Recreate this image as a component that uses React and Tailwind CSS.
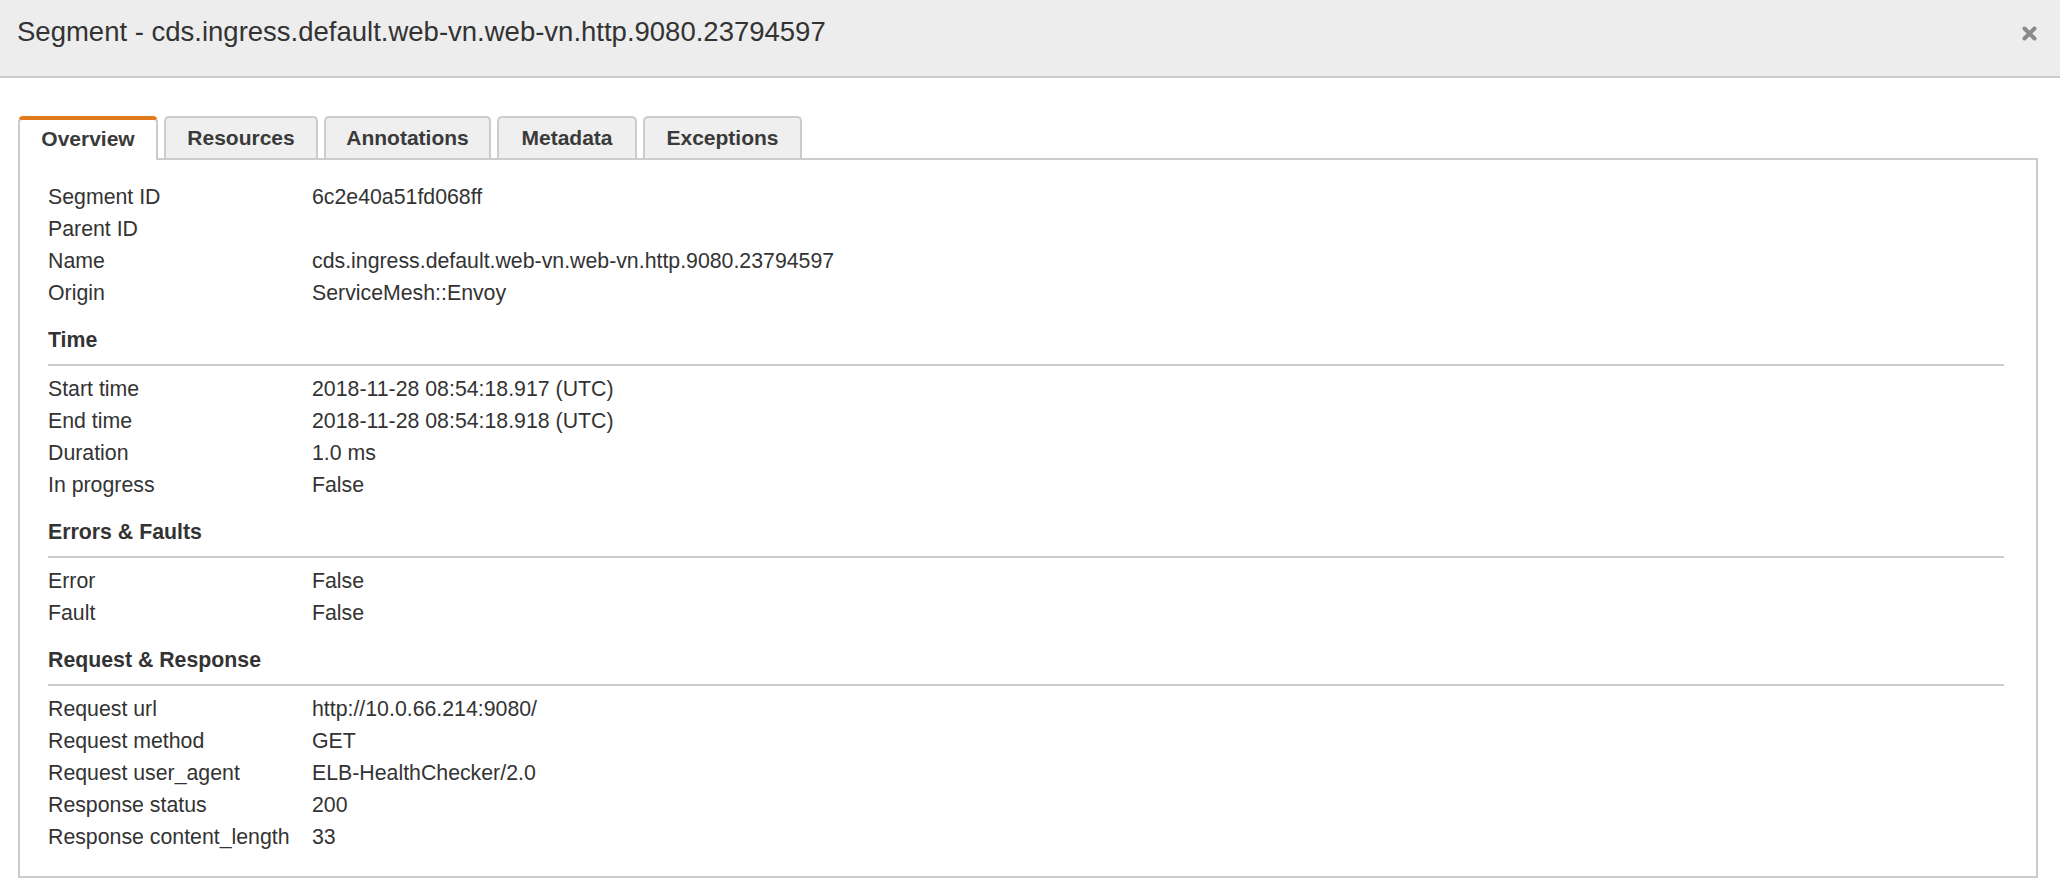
const overview = [
  ["Segment ID", "6c2e40a51fd068ff"],
  ["Parent ID", ""],
  ["Name", "cds.ingress.default.web-vn.web-vn.http.9080.23794597"],
  ["Origin", "ServiceMesh::Envoy"],
];

const sections = [
  {
    title: "Time",
    rows: [
      ["Start time", "2018-11-28 08:54:18.917 (UTC)"],
      ["End time", "2018-11-28 08:54:18.918 (UTC)"],
      ["Duration", "1.0 ms"],
      ["In progress", "False"],
    ],
  },
  {
    title: "Errors & Faults",
    rows: [
      ["Error", "False"],
      ["Fault", "False"],
    ],
  },
  {
    title: "Request & Response",
    rows: [
      ["Request url", "http://10.0.66.214:9080/"],
      ["Request method", "GET"],
      ["Request user_agent", "ELB-HealthChecker/2.0"],
      ["Response status", "200"],
      ["Response content_length", "33"],
    ],
  },
];

const tabs = [
  { label: "Overview", w: "w-[140px]", active: true },
  { label: "Resources", w: "w-[154px]" },
  { label: "Annotations", w: "w-[167px]" },
  { label: "Metadata", w: "w-[140px]" },
  { label: "Exceptions", w: "w-[159px]" },
];

function Rows({ rows }) {
  return (
    <div className="grid grid-cols-[264px_1fr] text-[21.3px] leading-[32px]">
      {rows.map(([k, v]) => (
        <div key={k} className="contents">
          <div className="whitespace-nowrap">{k}</div>
          <div className="min-h-[32px] whitespace-nowrap">{v}</div>
        </div>
      ))}
    </div>
  );
}

export default function App() {
  return (
    <div className="min-h-[896px] w-[2060px] bg-white font-['Liberation_Sans',Arial,sans-serif] text-[#333333]">
      <header className="flex h-[78px] items-start justify-between border-b-2 border-[#cccccc] bg-[#ededed] pl-[17px] pr-[23px]">
        <h1 className="pt-[16px] text-[27.5px] font-normal leading-[32px] text-[#333333]">
          Segment - cds.ingress.default.web-vn.web-vn.http.9080.23794597
        </h1>
        <button className="mt-[26px] flex h-[15px] w-[15px] items-center justify-center" aria-label="Close">
          <svg width="15" height="15" viewBox="0 0 15 15">
            <path d="M2.5 2.5 L12.5 12.5 M12.5 2.5 L2.5 12.5" stroke="#8a8a8a" strokeWidth="4" strokeLinecap="round" />
          </svg>
        </button>
      </header>

      <div className="mt-[38px] flex items-end gap-[6px] pl-[18px]">
        {tabs.map((t) =>
          t.active ? (
            <div
              key={t.label}
              className={`relative z-10 -mb-[2px] flex h-[44px] ${t.w} items-center justify-center rounded-t-[5px] border-x-2 border-t-[4px] border-x-[#cccccc] border-t-[#e07a1c] bg-white pb-[2px] text-[21px] font-bold text-[#3a3a3a]`}
            >
              {t.label}
            </div>
          ) : (
            <div
              key={t.label}
              className={`flex h-[42px] ${t.w} items-center justify-center rounded-t-[5px] border-x-2 border-t-2 border-[#cccccc] bg-[#efefef] text-[21px] font-bold text-[#3a3a3a]`}
            >
              {t.label}
            </div>
          )
        )}
      </div>

      <div className="ml-[18px] mr-[22px] border-2 border-[#cccccc] pb-[23px] pl-[28px] pr-[32px] pt-[21px]">
        <Rows rows={overview} />
        {sections.map((s) => (
          <div key={s.title}>
            <div className="mt-[15px] text-[21.3px] font-bold leading-[32px]">{s.title}</div>
            <div className="mt-[8px] h-[2px] bg-[#cccccc]" />
            <div className="mt-[7px]">
              <Rows rows={s.rows} />
            </div>
          </div>
        ))}
      </div>
    </div>
  );
}
